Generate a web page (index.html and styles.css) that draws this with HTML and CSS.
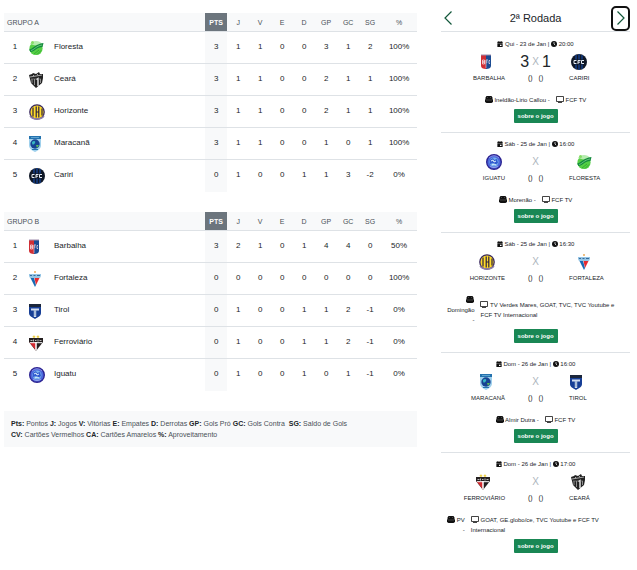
FILE: index.html
```html
<!DOCTYPE html>
<html lang="pt-BR">

<head>
    <meta charset="UTF-8">
    <meta name="viewport" content="width=device-width, initial-scale=1.0">
    <title>Campeonato - Tabela</title>
    <link rel="stylesheet" href="styles.css">
</head>

<body>

    <!-- Icons and team badges -->
    <svg class="sprite" aria-hidden="true">
        <symbol id="floresta" viewBox="0 0 16 16">
            <circle cx="7" cy="8.500" r="6.600" fill="#55cf45" />
            <path d="M1 4c2-4 10-4 12 0l-5 2z" fill="#b5ecae" />
            <path d="M0 9.500C3 9.500 6 4 14.500 3L13.500 7C8 7 5 12 1.500 12z" fill="#128a3c" />
            <path d="M2 10.500C5 10 7 6 13 5" fill="none" stroke="#8fdc9a" stroke-width=".7" />
            <path d="M5 14l5-4M8 14.500l4-4" stroke="#35ad30" />
            <circle cx="3.500" cy="2.500" r="1.500" fill="#86dc66" />
        </symbol>
        <symbol id="ceara" viewBox="0 0 16 16">
            <path d="M0 3l3-1 1-1 3 1 3-2 1 2 3 0v4l-1 5-6 5-5-5-1-4z" fill="#222" />
            <path d="M1 5l12-2M4 3l1 1M8 2l1 1" stroke="#ccc" stroke-width=".8" />
            <path d="M3 7v4M5.500 7v6M11.500 7v4" stroke="#aaa" stroke-width=".8" />
            <path d="M7.500 7.500L9 6.500V14" fill="none" stroke="#fff" stroke-width="1.300" />
            <path d="M2 7h10" stroke="#999" stroke-width=".6" />
        </symbol>
        <symbol id="horizonte" viewBox="0 0 16 16">
            <circle cx="8" cy="8" r="7.200" fill="#ffdb29" stroke="#3a2a63" stroke-width="1.300" />
            <path d="M4 3.500v9M7.200 2.500v11M9.800 2.500v11M13 4.500v7M7 8h3" stroke="#2b2140" stroke-width="1.200" />
            <path d="M1 12c3 4 11 4 14 0" fill="none" stroke="#8d7fa8" stroke-width="1.400" />
        </symbol>
        <symbol id="maracana" viewBox="0 0 16 16">
            <path d="M0 0h12v9c0 4-3 5.500-6 7-3-1.500-6-3-6-7z" fill="#9fd0ec" />
            <path d="M0 0h12v3H0z" fill="#2472ae" />
            <path d="M2 1.500h8" stroke="#5fa3d0" />
            <circle cx="6" cy="8" r="4.700" fill="#174292" />
            <path d="M3 6c2-2 4-1 3 1s-2 1-2 2c-1-1-1-2-1-3z" fill="#36b7c2" />
            <path d="M7 9l3 0-2 3z" fill="#5dbb57" />
            <path d="M3 13.500h6" stroke="#2472ae" />
        </symbol>
        <symbol id="cariri" viewBox="0 0 16 16">
            <circle cx="8" cy="8" r="8" fill="#101827" />
            <path d="M5 1v14M8 0v16M11 1v14" stroke="#144395" stroke-width="1.300" />
            <path d="M2 5.500h12v5H2z" fill="#101827" />
            <path d="M5.500 6.500H3v3h2.500M7 10V6.500h2.500M7 8.200h2M13 6.500h-2.500v3H13" fill="none" stroke="#e6edf5" />
        </symbol>
        <symbol id="barbalha" viewBox="0 0 16 16">
            <path d="M0 1h5v14c-3 0-5-1-5-3z" fill="#d02f35" />
            <path d="M5 1h5v11c0 2-2 3-5 3z" fill="#1b4b92" />
            <path d="M0 1h10" stroke="#9d8baa" />
            <path d="M1.500 6v4h2V8h-2 2V6zM5 10V6h2M5 8h1.500M9 6.500H8v3h1" fill="none" stroke="#f4dfe5" stroke-width=".8" />
            <path d="M5 10v4" stroke="#e9bdc9" stroke-width=".7" />
        </symbol>
        <symbol id="fortaleza" viewBox="0 0 16 16">
            <circle cx="6" cy="1" r=".9" fill="#e9a348" />
            <path d="M0 3h12v2l-1 2H1L0 5z" fill="#95c5e5" />
            <path d="M1 4.500h2M4.500 4.500h2M8 4.500h3" stroke="#376c9c" />
            <path d="M1.500 7h3.500l2 7-1 2z" fill="#176bb5" />
            <path d="M5.500 7h5L7 14z" fill="#e62b30" />
        </symbol>
        <symbol id="tirol" viewBox="0 0 16 16">
            <path d="M0 1h12v9c0 3-3 4-6 6-3-2-6-3-6-6z" fill="#173f96" />
            <path d="M0 1h12v3H0z" fill="#1b263b" />
            <path d="M2 5.500h8v2H7.200V14H4.800V7.500H2z" fill="#d3deef" />
            <path d="M6 7v6" stroke="#6e8fbc" stroke-width=".8" />
        </symbol>
        <symbol id="ferroviario" viewBox="0 0 16 16">
            <path d="M5 0l.6 1.200h1L6 2l.2 1L5 2.500 3.800 3 4 2l-.7-.8h1zM9 0l.6 1.200h1L10 2l.2 1L9 2.500 7.800 3 8 2l-.7-.8h1z" fill="#ebcb3a" />
            <path d="M0 3h14v4L7 16 0 7z" fill="#241f20" />
            <path d="M0.500 7.500h6.500v8z" fill="#d42a31" />
            <path d="M1 7.700h12" stroke="#fff" />
            <path d="M7 7v8.500" stroke="#fff" stroke-width="1.500" />
            <path d="M1.500 5.500h2M4.500 4.500v2M6 5.500h1.500M9 4.500v2M10.500 5.500h2" stroke="#bbb" />
        </symbol>
        <symbol id="iguatu" viewBox="0 0 16 16">
            <circle cx="8" cy="8" r="7.300" fill="#4b68dc" stroke="#2d2492" stroke-width="1.400" />
            <circle cx="8" cy="8" r="4.500" fill="#79b4ed" />
            <path d="M4 6l3-2 1 2 3-1 1 4-3 2-2-2-3 1z" fill="#315bd0" />
            <path d="M5 7l2-1 1 2 2-1M6 11l2-1 2 1" fill="none" stroke="#e1f3fc" />
            <path d="M3 4c3-3 7-3 10 0" fill="none" stroke="#a6a5eb" stroke-width=".7" />
            <path d="M4 12c3 2 5 2 8 0" fill="none" stroke="#b7c0f2" stroke-width=".7" />
        </symbol>
        <symbol id="calendar" viewBox="0 0 14 16">
            <path d="M3 0h2v2h4V0h2v2h3v3H0V2h3zM0 6h14v10H0zM7 10v3h4v-3z" fill="#111" fill-rule="evenodd" />
        </symbol>
        <symbol id="clock" viewBox="0 0 16 16">
            <circle cx="8" cy="8" r="8" fill="#111" />
            <path d="M8 3v5l3 3" fill="none" stroke="#fff" stroke-width="2" />
        </symbol>
        <symbol id="stadium" viewBox="0 0 16 14">
            <path d="M3 0h10l2 3v3l1 2v4l-3 2H3l-3-2V8l1-2V3z" fill="#111" />
            <path d="M4 3h2M10 3h2M2 8h12" stroke="#777" />
        </symbol>
        <symbol id="tv" viewBox="0 0 16 14">
            <path d="M1 1h14v10H1zM4 13h8" fill="none" stroke="#222" stroke-width="1.700" />
        </symbol>
    </svg>

    <div class="container">

        <!-- Standings -->
        <main class="standings">
            <table>
                <colgroup><col class="col-pos"><col class="col-logo"><col><col class="col-num" span="8"><col class="col-rate"></colgroup>
                <thead>
                    <tr><th class="group" colspan="3">GRUPO A</th><th class="pts">PTS</th><th>J</th><th>V</th><th>E</th><th>D</th><th>GP</th><th>GC</th><th>SG</th><th>%</th></tr>
                </thead>
                <tbody>
                    <tr><td>1</td><td class="logo"><svg class="badge"><use href="#floresta" /></svg></td><td class="team">Floresta</td><td class="pts">3</td><td>1</td><td>1</td><td>0</td><td>0</td><td>3</td><td>1</td><td>2</td><td>100%</td></tr>
                    <tr><td>2</td><td class="logo"><svg class="badge"><use href="#ceara" /></svg></td><td class="team">Ceará</td><td class="pts">3</td><td>1</td><td>1</td><td>0</td><td>0</td><td>2</td><td>1</td><td>1</td><td>100%</td></tr>
                    <tr><td>3</td><td class="logo"><svg class="badge"><use href="#horizonte" /></svg></td><td class="team">Horizonte</td><td class="pts">3</td><td>1</td><td>1</td><td>0</td><td>0</td><td>2</td><td>1</td><td>1</td><td>100%</td></tr>
                    <tr><td>4</td><td class="logo"><svg class="badge"><use href="#maracana" /></svg></td><td class="team">Maracanã</td><td class="pts">3</td><td>1</td><td>1</td><td>0</td><td>0</td><td>1</td><td>0</td><td>1</td><td>100%</td></tr>
                    <tr><td>5</td><td class="logo"><svg class="badge"><use href="#cariri" /></svg></td><td class="team">Cariri</td><td class="pts">0</td><td>1</td><td>0</td><td>0</td><td>1</td><td>1</td><td>3</td><td>-2</td><td>0%</td></tr>
                </tbody>
            </table>

            <table>
                <colgroup><col class="col-pos"><col class="col-logo"><col><col class="col-num" span="8"><col class="col-rate"></colgroup>
                <thead>
                    <tr><th class="group" colspan="3">GRUPO B</th><th class="pts">PTS</th><th>J</th><th>V</th><th>E</th><th>D</th><th>GP</th><th>GC</th><th>SG</th><th>%</th></tr>
                </thead>
                <tbody>
                    <tr><td>1</td><td class="logo"><svg class="badge"><use href="#barbalha" /></svg></td><td class="team">Barbalha</td><td class="pts">3</td><td>2</td><td>1</td><td>0</td><td>1</td><td>4</td><td>4</td><td>0</td><td>50%</td></tr>
                    <tr><td>2</td><td class="logo"><svg class="badge"><use href="#fortaleza" /></svg></td><td class="team">Fortaleza</td><td class="pts">0</td><td>0</td><td>0</td><td>0</td><td>0</td><td>0</td><td>0</td><td>0</td><td>100%</td></tr>
                    <tr><td>3</td><td class="logo"><svg class="badge"><use href="#tirol" /></svg></td><td class="team">Tirol</td><td class="pts">0</td><td>1</td><td>0</td><td>0</td><td>1</td><td>1</td><td>2</td><td>-1</td><td>0%</td></tr>
                    <tr><td>4</td><td class="logo"><svg class="badge"><use href="#ferroviario" /></svg></td><td class="team">Ferroviário</td><td class="pts">0</td><td>1</td><td>0</td><td>0</td><td>1</td><td>1</td><td>2</td><td>-1</td><td>0%</td></tr>
                    <tr><td>5</td><td class="logo"><svg class="badge"><use href="#iguatu" /></svg></td><td class="team">Iguatu</td><td class="pts">0</td><td>1</td><td>0</td><td>0</td><td>1</td><td>0</td><td>1</td><td>-1</td><td>0%</td></tr>
                </tbody>
            </table>

            <p class="legend">
                <b>Pts:</b> Pontos <b>J:</b> Jogos <b>V:</b> Vitórias <b>E:</b> Empates <b>D:</b> Derrotas <b>GP:</b> Gols Pró <b>GC:</b> Gols Contra &nbsp;<b>SG:</b> Saldo de Gols<br>
                <b>CV:</b> Cartões Vermelhos <b>CA:</b> Cartões Amarelos <b>%:</b> Aproveitamento
            </p>
        </main>

        <!-- Round matches -->
        <aside class="round">
            <header class="round-header">
                <button class="arrow" aria-label="Rodada anterior"><svg viewBox="0 0 8 14"><path d="M7.500 .5L1 7l6.500 6.500" /></svg></button>
                <h2>2ª Rodada</h2>
                <button class="arrow selected" aria-label="Próxima rodada"><svg viewBox="0 0 8 14"><path d="M.5 .5L7 7 .5 13.500" /></svg></button>
            </header>

            <section class="match">
                <p class="date"><svg class="icon"><use href="#calendar" /></svg> Qui - 23 de Jan | <svg class="icon"><use href="#clock" /></svg> 20:00</p>
                <div class="teams">
                    <div class="side home"><svg class="badge"><use href="#barbalha" /></svg><span>BARBALHA</span></div>
                    <div class="score"><div class="goals"><b>3</b><span>X</span><b>1</b></div><div class="penalties"><span>()</span><span>()</span></div></div>
                    <div class="side away"><svg class="badge"><use href="#cariri" /></svg><span>CARIRI</span></div>
                </div>
                <div class="info">
                    <p class="place"><svg class="icon-wide"><use href="#stadium" /></svg> Ineldão-Lirio Callou -</p>
                    <p><svg class="icon-wide"><use href="#tv" /></svg> FCF TV</p>
                </div>
                <button class="about">sobre o jogo</button>
            </section>

            <section class="match">
                <p class="date"><svg class="icon"><use href="#calendar" /></svg> Sáb - 25 de Jan | <svg class="icon"><use href="#clock" /></svg> 16:00</p>
                <div class="teams">
                    <div class="side home"><svg class="badge"><use href="#iguatu" /></svg><span>IGUATU</span></div>
                    <div class="score"><div class="goals"><span>X</span></div><div class="penalties"><span>()</span><span>()</span></div></div>
                    <div class="side away"><svg class="badge"><use href="#floresta" /></svg><span>FLORESTA</span></div>
                </div>
                <div class="info">
                    <p class="place"><svg class="icon-wide"><use href="#stadium" /></svg> Morenão -</p>
                    <p><svg class="icon-wide"><use href="#tv" /></svg> FCF TV</p>
                </div>
                <button class="about">sobre o jogo</button>
            </section>

            <section class="match">
                <p class="date"><svg class="icon"><use href="#calendar" /></svg> Sáb - 25 de Jan | <svg class="icon"><use href="#clock" /></svg> 16:30</p>
                <div class="teams">
                    <div class="side home"><svg class="badge"><use href="#horizonte" /></svg><span>HORIZONTE</span></div>
                    <div class="score"><div class="goals"><span>X</span></div><div class="penalties"><span>()</span><span>()</span></div></div>
                    <div class="side away"><svg class="badge"><use href="#fortaleza" /></svg><span>FORTALEZA</span></div>
                </div>
                <div class="info">
                    <p class="place"><svg class="icon-wide"><use href="#stadium" /></svg><br>Domingão<br>-</p>
                    <p><svg class="icon-wide"><use href="#tv" /></svg> TV Verdes Mares, GOAT, TVC, TVC Youtube e FCF TV Internacional</p>
                </div>
                <button class="about">sobre o jogo</button>
            </section>

            <section class="match">
                <p class="date"><svg class="icon"><use href="#calendar" /></svg> Dom - 26 de Jan | <svg class="icon"><use href="#clock" /></svg> 16:00</p>
                <div class="teams">
                    <div class="side home"><svg class="badge"><use href="#maracana" /></svg><span>MARACANÃ</span></div>
                    <div class="score"><div class="goals"><span>X</span></div><div class="penalties"><span>()</span><span>()</span></div></div>
                    <div class="side away"><svg class="badge"><use href="#tirol" /></svg><span>TIROL</span></div>
                </div>
                <div class="info">
                    <p class="place"><svg class="icon-wide"><use href="#stadium" /></svg> Almir Dutra -</p>
                    <p><svg class="icon-wide"><use href="#tv" /></svg> FCF TV</p>
                </div>
                <button class="about">sobre o jogo</button>
            </section>

            <section class="match">
                <p class="date"><svg class="icon"><use href="#calendar" /></svg> Dom - 26 de Jan | <svg class="icon"><use href="#clock" /></svg> 17:00</p>
                <div class="teams">
                    <div class="side home"><svg class="badge"><use href="#ferroviario" /></svg><span>FERROVIÁRIO</span></div>
                    <div class="score"><div class="goals"><span>X</span></div><div class="penalties"><span>()</span><span>()</span></div></div>
                    <div class="side away"><svg class="badge"><use href="#ceara" /></svg><span>CEARÁ</span></div>
                </div>
                <div class="info">
                    <p class="place"><svg class="icon-wide"><use href="#stadium" /></svg> PV<br>-</p>
                    <p><svg class="icon-wide"><use href="#tv" /></svg> GOAT, GE.globo/ce, TVC Youtube e FCF TV Internacional</p>
                </div>
                <button class="about">sobre o jogo</button>
            </section>
        </aside>
    </div>

</body>

</html>
```
FILE: styles.css
```css
/* Global styles */
* {
    margin: 0;
    padding: 0;
    box-sizing: border-box;
}

body {
    font-family: "Liberation Sans", Arial, sans-serif;
    font-size: 8px;
    color: #212529;
    background: #fff;
}

button {
    font-family: inherit;
    border: none;
    cursor: pointer;
}

.sprite {
    display: none;
}

.container {
    display: grid;
    grid-template-columns: 35fr 16fr;
    gap: 24px;
    padding: 0 7px 0 4px;
}

/* Standings */
.standings {
    padding-top: 13px;
}

table {
    width: 100%;
    table-layout: fixed;
    border-collapse: separate;
    border-spacing: 0;
    margin-bottom: 20px;
}

.col-pos,
.col-num {
    width: 22px;
}

.col-logo {
    width: 28px;
}

.col-rate {
    width: 36px;
}

th {
    height: 19px;
    background-color: #f8f9fa;
    border-bottom: 1px solid #dee2e6;
    color: #495057;
    font-size: 7px;
    font-weight: normal;
    text-align: center;
}

th.group {
    padding-left: 3px;
    text-align: left;
}

td {
    height: 32px;
    padding-bottom: 3px;
    border-bottom: 1px solid #dee2e6;
    text-align: center;
}

tr:last-child td {
    border-bottom: none;
}

td.pts {
    background-color: #f8f9fa;
}

th.pts {
    background-color: #6c757d;
    color: #fff;
    font-weight: bold;
}

td.logo {
    padding: 0 0 0 3px;
}

td.team {
    text-align: left;
}

.badge {
    display: block;
    width: 16px;
    height: 16px;
}

.legend {
    padding: 7px;
    background-color: #f8f9fa;
    color: #495057;
    font-size: 7px;
    line-height: 11px;
}

.legend b {
    color: #212529;
}

/* Round */
.round {
    font-size: 6px;
    line-height: 10px;
}

.round-header {
    display: grid;
    grid-template-columns: 1fr auto 1fr;
    align-items: center;
    height: 32px;
    padding-top: 5px;
    margin-bottom: 1px;
    border-bottom: 1px solid #dee2e6;
}

.round-header h2 {
    font-size: 11px;
    font-weight: normal;
}

.arrow {
    width: 13px;
    height: 25px;
    background: none;
}

.arrow svg {
    display: block;
    width: 8px;
    height: 14px;
    margin: 0 auto;
}

.arrow path {
    fill: none;
    stroke: #12573a;
    stroke-width: 1.2;
}

.arrow.selected {
    justify-self: end;
    width: 19px;
    border: 2px solid #111;
    border-radius: 5px;
}

/* Match */
.match {
    padding: 6px 6px 9px;
    border-bottom: 1px solid #dee2e6;
    text-align: center;
}

.match:last-child {
    border-bottom: none;
}

.icon {
    width: 6px;
    height: 6px;
    vertical-align: -1px;
}

.icon-wide {
    width: 8px;
    height: 7px;
    vertical-align: -1px;
}

.teams {
    display: grid;
    grid-template-columns: 1fr 61px 1fr;
    margin: 5px 0 12px;
}

.side {
    display: flex;
    flex-direction: column;
    align-items: center;
    gap: 3px;
}

.home {
    justify-self: end;
}

.away {
    justify-self: start;
    padding-left: 3px;
}

.goals {
    display: flex;
    justify-content: center;
    align-items: center;
    gap: 3px;
    height: 16px;
}

.goals b {
    font-size: 16px;
    font-weight: normal;
}

.goals span {
    color: #adb5bd;
    font-size: 10px;
}

.penalties {
    display: flex;
    justify-content: center;
    gap: 6px;
    margin-top: 3px;
    font-size: 7px;
}

.info {
    display: flex;
    justify-content: center;
    align-items: center;
    gap: 6px;
    text-align: left;
}

.place {
    flex-shrink: 0;
    text-align: right;
}

.about {
    display: block;
    height: 14px;
    padding: 0 4px;
    margin: 4px auto 0;
    border-radius: 1px;
    background-color: #198754;
    color: #fff;
    font-size: 6px;
    font-weight: bold;
}
```
